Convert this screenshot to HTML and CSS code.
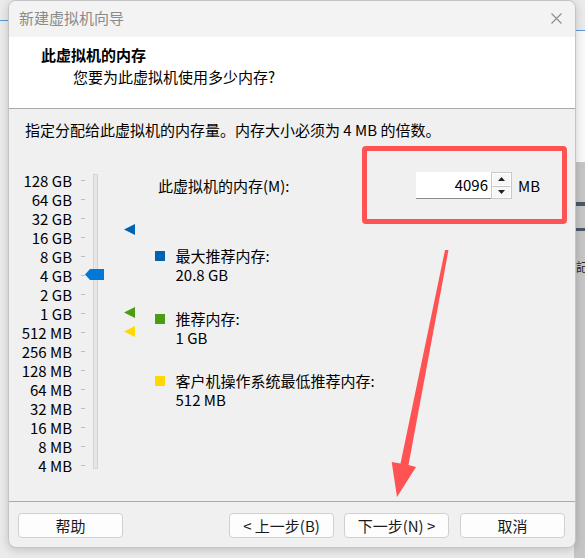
FILE: index.html
```html
<!DOCTYPE html>
<html lang="zh-CN">
<head>
<meta charset="utf-8">
<title>新建虚拟机向导</title>
<link rel="stylesheet" href="styles.css">
</head>
<body>
<div class="desktop">
  <div class="bg-line bg-line-left"></div>
  <div class="bg-line bg-line-right"></div>
  <div class="bg-win"></div>
  <div class="bg-grey"><div class="bg-bar bar1"></div><div class="bg-bar bar2"></div><span class="bg-text">記</span></div>
</div>

<div class="dialog">
  <div class="titlebar">
    <span class="title">新建虚拟机向导</span>
    <svg class="close" width="11" height="11" viewBox="0 0 11 11"><path d="M0.5 0.5 L10.5 10.5 M10.5 0.5 L0.5 10.5" stroke="#8c8c8c" stroke-width="1.1" fill="none"/></svg>
  </div>
  <div class="header">
    <div class="h-title">此虚拟机的内存</div>
    <div class="h-sub">您要为此虚拟机使用多少内存?</div>
  </div>
  <div class="content">
    <div class="instr">指定分配给此虚拟机的内存量。内存大小必须为 4 MB 的倍数。</div>
    <div class="main">
      <div class="scale">
        <div class="ticks">
          <div class="row"><span>128 GB</span><i></i></div>
          <div class="row"><span>64 GB</span><i></i></div>
          <div class="row"><span>32 GB</span><i></i></div>
          <div class="row"><span>16 GB</span><i></i></div>
          <div class="row"><span>8 GB</span><i></i></div>
          <div class="row"><span>4 GB</span><i></i></div>
          <div class="row"><span>2 GB</span><i></i></div>
          <div class="row"><span>1 GB</span><i></i></div>
          <div class="row"><span>512 MB</span><i></i></div>
          <div class="row"><span>256 MB</span><i></i></div>
          <div class="row"><span>128 MB</span><i></i></div>
          <div class="row"><span>64 MB</span><i></i></div>
          <div class="row"><span>32 MB</span><i></i></div>
          <div class="row"><span>16 MB</span><i></i></div>
          <div class="row"><span>8 MB</span><i></i></div>
          <div class="row"><span>4 MB</span><i></i></div>
        </div>
        <div class="track"></div>
        <svg class="thumb" width="19" height="11" viewBox="0 0 19 11"><polygon points="0,5.5 5,0 19,0 19,11 5,11" fill="#0078d7"/></svg>
        <svg class="marker m-blue" width="11" height="11" viewBox="0 0 11 11"><polygon points="0,5.5 11,0 11,11" fill="#0063b1"/></svg>
        <svg class="marker m-green" width="11" height="11" viewBox="0 0 11 11"><polygon points="0,5.5 11,0 11,11" fill="#4b9c10"/></svg>
        <svg class="marker m-yellow" width="11" height="11" viewBox="0 0 11 11"><polygon points="0,5.5 11,0 11,11" fill="#ffd800"/></svg>
      </div>
      <div class="right">
        <div class="mem-row">
          <span class="mem-label">此虚拟机的内存(M):</span>
          <div class="spin">
            <div class="spin-input">4096</div>
            <div class="spin-btns">
              <div class="spin-btn"><svg width="7" height="4" viewBox="0 0 7 4"><polygon points="0,4 3.5,0 7,4" fill="#222"/></svg></div>
              <div class="spin-btn"><svg width="7" height="4" viewBox="0 0 7 4"><polygon points="0,0 7,0 3.5,4" fill="#222"/></svg></div>
            </div>
          </div>
          <span class="unit">MB</span>
        </div>
        <div class="legend">
          <div class="lg"><span class="sq sq-blue"></span><div class="lg-text">最大推荐内存:<br>20.8 GB</div></div>
          <div class="lg"><span class="sq sq-green"></span><div class="lg-text">推荐内存:<br>1 GB</div></div>
          <div class="lg"><span class="sq sq-yellow"></span><div class="lg-text">客户机操作系统最低推荐内存:<br>512 MB</div></div>
        </div>
      </div>
    </div>
  </div>
  <div class="footer">
    <button class="btn">帮助</button>
    <span class="spacer"></span>
    <button class="btn">&lt; 上一步(B)</button>
    <button class="btn btn-next">下一步(N) &gt;</button>
    <button class="btn btn-cancel">取消</button>
  </div>
</div>

<div class="redbox"></div>
<svg class="arrow" width="585" height="558" viewBox="0 0 585 558">
  <polygon points="445,250 448.5,250 408.5,465 416,467 397,497 391.7,462 400.5,463.5" fill="#ff5252"/>
</svg>
</body>
</html>
```

FILE: styles.css
```css
* { box-sizing: border-box; }
html, body { margin: 0; padding: 0; }
body {
  width: 585px;
  height: 558px;
  overflow: hidden;
  background: #ebebeb;
  font-family: "Noto Sans CJK SC", "Noto Sans", sans-serif;
  font-size: 15px;
  color: #000;
  position: relative;
}

/* desktop behind the dialog */
.desktop { position: absolute; inset: 0; overflow: hidden; }
.bg-line { position: absolute; height: 1px; background: #5b9bd5; }
.bg-line-left { left: 0; top: 20px; width: 10px; }
.bg-line-right { left: 574px; top: 30px; width: 11px; }
.bg-win { position: absolute; left: 574px; top: 31px; width: 11px; height: 131px; background: #fafafa; }
.bg-grey { position: absolute; left: 574px; top: 162px; width: 11px; height: 396px; background: #c6c6c6; overflow: hidden; }
.bg-bar { position: absolute; left: 0; width: 11px; height: 4px; background: #4a5866; }
.bar1 { top: 40px; }
.bar2 { top: 66px; height: 3px; }
.bg-text { position: absolute; left: 2px; top: 98px; font-size: 12px; line-height: 14px; color: #222; }

/* dialog window */
.dialog {
  position: relative;
  margin-left: 8px;
  width: 568px;
  height: 548px;
  border: 1px solid #c4c4c4;
  border-radius: 8px;
  background: #f0f0f0;
  box-shadow: 0 2px 10px rgba(0,0,0,0.18);
  overflow: hidden;
  display: flex;
  flex-direction: column;
}
.titlebar {
  height: 36px;
  background: #f3f3f3;
  display: flex;
  align-items: center;
  padding: 0 13px 0 10px;
}
.title { flex: 1; color: #8a8a8a; line-height: 36px; margin-top: -2px; }
.close { display: block; margin-top: -1px; }

.header {
  height: 72px;
  background: #fff;
  border-bottom: 1px solid #a9a9a9;
  padding-top: 8px;
}
.h-title { font-weight: 700; line-height: 19px; padding-left: 32px; }
.h-sub { line-height: 19px; padding-left: 64px; margin-top: 3px; }

.content {
  height: 392px;
  background: #f0f0f0;
}
.instr { line-height: 19px; padding: 11px 0 0 16px; }

.main { display: flex; margin-top: 32px; }

.scale { position: relative; width: 146px; flex: none; display: flex; }
.ticks { display: flex; flex-direction: column; }
.row {
  width: 76px;
  height: 19px;
  display: flex;
  align-items: center;
  justify-content: flex-end;
  line-height: 19px;
}
.row i { display: block; width: 4px; height: 1px; background: #bdbdbd; margin-left: 9px; }
.track {
  margin-left: 8px;
  margin-top: 3px;
  width: 5px;
  height: 295px;
  background: #e6e6e6;
  border: 1px solid #d4d4d4;
}
.thumb { position: absolute; left: 76px; top: 98px; }
.marker { position: absolute; left: 115px; }
.m-blue { top: 53px; }
.m-green { top: 136px; }
.m-yellow { top: 155px; }

.right { flex: 1; padding-top: 1px; }
.mem-row { display: flex; align-items: center; height: 27px; }
.mem-label { width: 261px; padding-left: 3px; line-height: 19px; }
.spin { display: flex; height: 27px; }
.spin-input {
  width: 75px;
  height: 27px;
  background: #fff;
  border-bottom: 1px solid #8a8a8a;
  text-align: right;
  padding-right: 3px;
  line-height: 26px;
}
.spin-btns { width: 21px; display: flex; flex-direction: column; border: 1px solid #c8c8c8; background: #e9e9e9; }
.spin-btn { flex: 1; display: flex; align-items: center; justify-content: center; background: #f7f7f7; border: 1px solid #fff; }
.spin-btn + .spin-btn { border-top: 1px solid #c8c8c8; }
.spin-btn svg { display: block; }
.unit { margin-left: 6px; line-height: 19px; }

.legend { margin-top: 47px; display: flex; flex-direction: column; gap: 24.5px; }
.lg { display: flex; align-items: flex-start; }
.sq { display: block; width: 10px; height: 10px; margin-top: 5px; flex: none; }
.sq-blue { background: #0063b1; }
.sq-green { background: #4b9c10; }
.sq-yellow { background: #ffd800; }
.lg-text { margin-left: 10.5px; line-height: 19px; }

.footer {
  height: 46px;
  border-top: 1px solid #a9a9a9;
  display: flex;
  align-items: flex-start;
  padding: 11px 10px 0 9px;
}
.spacer { flex: 1; }
.btn {
  width: 105px;
  height: 25px;
  background: #fdfdfd;
  border: 1px solid #d0d0d0;
  border-radius: 4px;
  font-family: "Noto Sans CJK SC", "Noto Sans", sans-serif;
  font-size: 15px;
  line-height: 21px;
  color: #1a1a1a;
  padding: 0;
}
.btn-next { margin-left: 10px; }
.btn-cancel { margin-left: 11px; }

/* annotations over the screenshot */
.redbox {
  position: absolute;
  left: 362px;
  top: 146px;
  width: 205px;
  height: 78px;
  border: 5px solid #ff5252;
  border-radius: 4px;
}
.arrow { position: absolute; left: 0; top: 0; pointer-events: none; }
```
